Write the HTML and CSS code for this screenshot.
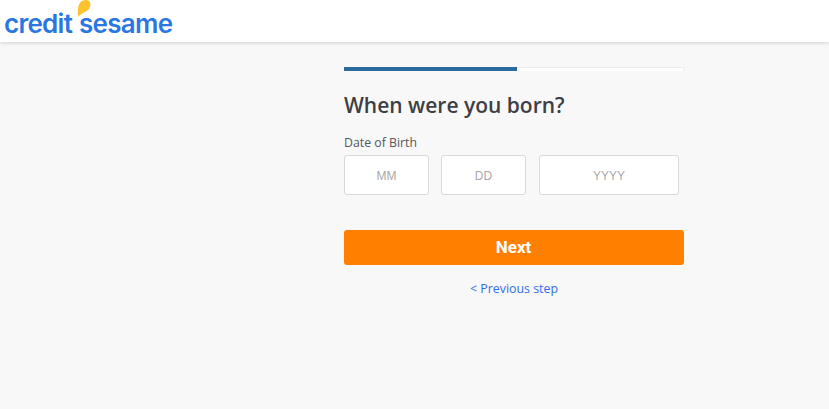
FILE: index.html
```html
<!DOCTYPE html>
<html lang="en">
<head>
<meta charset="utf-8">
<title>Credit Sesame</title>
<link rel="stylesheet" href="styles.css">
</head>
<body>
<header class="topbar">
  <div class="logo">
    <span class="logo-text">credit sesame</span>
    <svg class="logo-drop" width="14" height="17" viewBox="0 0 14 17"><path d="M1.2 17C.3 12.5.6 6.5 2.8 3 4.6.3 9-.7 11.4.6 13.9 2 14 6 12 9 9.8 12.2 4 12.8 1.2 17Z" fill="#fcc32f"/></svg>
  </div>
</header>
<main class="page">
  <section class="form">
    <div class="progress"><div class="progress-fill"></div></div>
    <h1 class="title">When were you born?</h1>
    <label class="label">Date of Birth</label>
    <div class="fields">
      <div class="field field-s">MM</div>
      <div class="field field-s">DD</div>
      <div class="field field-l">YYYY</div>
    </div>
    <button class="next">Next</button>
    <a class="prev" href="#">&lt; Previous step</a>
  </section>
</main>
</body>
</html>
```
FILE: styles.css
```css
* { box-sizing: border-box; }
html, body { margin: 0; height: 100%; }
body {
  background: #f8f8f8;
  font-family: "Open Sans", "Noto Sans", sans-serif;
  overflow: hidden;
}
.topbar {
  height: 42px;
  background: #fff;
  box-shadow: 0 1px 4px rgba(0,0,0,.16);
  padding-left: 4px;
}
.logo { position: relative; width: 170px; height: 42px; }
.logo-text {
  position: absolute;
  left: 0;
  top: 9px;
  font-family: Inter, "Liberation Sans", sans-serif;
  font-size: 26px;
  line-height: 30px;
  font-weight: 600;
  letter-spacing: -.72px;
  word-spacing: 1px;
  color: #2a77e4;
  white-space: nowrap;
}
.logo-drop { position: absolute; left: 73px; top: 0; }
.page { display: flex; padding: 25px 0 0 344px; }
.form { width: 340px; display: flex; flex-direction: column; }
.progress {
  height: 4px;
  background: #fff;
  border-top: 1px solid #eee;
  border-right: 1px solid #eee;
}
.progress-fill { width: 173px; height: 4px; margin-top: -1px; background: #2b6a9e; }
.title {
  margin: 18px 0 0;
  font-size: 21px;
  line-height: 32px;
  font-weight: 600;
  color: #3d3f45;
}
.label {
  margin-top: 13px;
  font-size: 12.3px;
  line-height: 18px;
  color: #55575c;
}
.fields { display: flex; gap: 12px; margin-top: 3px; }
.field {
  height: 40px;
  padding-top: 2px;
  background: #fff;
  border: 1px solid #d8d8d8;
  border-radius: 3px;
  display: flex;
  align-items: center;
  justify-content: center;
  font-family: "Liberation Sans", Arial, sans-serif;
  font-size: 12px;
  color: #a8a8a8;
}
.field-s { width: 85px; }
.field-l { width: 140px; margin-left: 1px; }
.next {
  margin-top: 35px;
  height: 35px;
  width: 340px;
  padding: 0 1px 2px 0;
  border: 0;
  border-radius: 3px;
  background: #ff8000;
  color: #fff;
  font-family: Roboto, "Liberation Sans", sans-serif;
  font-size: 17px;
  font-weight: 700;
}
.prev {
  margin-top: 15px;
  text-align: center;
  font-size: 12.4px;
  line-height: 18px;
  color: #2f6fe8;
  text-decoration: none;
}
```
